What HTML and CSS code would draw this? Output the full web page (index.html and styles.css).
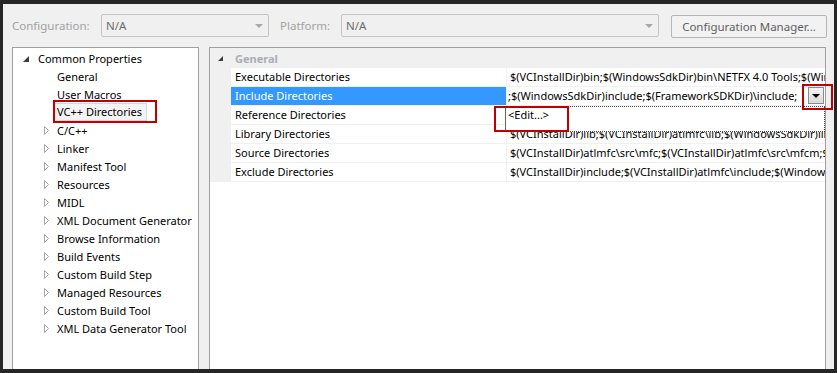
FILE: index.html
```html
<!DOCTYPE html>
<html lang="en">
<head>
    <meta charset="utf-8">
    <title>Property Pages</title>
    <link rel="stylesheet" href="styles.css">
</head>
<body>
    <div class="window">
        <div class="toolbar">
            <span class="label config-label">Configuration:</span>
            <div class="combo config-combo"><span>N/A</span><i class="combo-arrow"></i></div>
            <span class="label platform-label">Platform:</span>
            <div class="combo platform-combo"><span>N/A</span><i class="combo-arrow"></i></div>
            <button class="manager">Configuration Manager...</button>
        </div>

        <div class="panes">
            <div class="tree">
                <div class="node root">
                    <svg class="exp" width="6" height="6" viewBox="0 0 6 6"><polygon points="6,0 6,6 0,6" fill="#3c3c3c"/></svg>
                    Common Properties
                </div>
                <div class="node leaf">General</div>
                <div class="node leaf">User Macros</div>
                <div class="node leaf"><span class="selected">VC++ Directories</span></div>
                <div class="node"><svg class="exp" width="5" height="9" viewBox="0 0 5 9"><polygon points="0.5,0.5 4.5,4.5 0.5,8.5" fill="none" stroke="#a6a6a6"/></svg>C/C++</div>
                <div class="node"><svg class="exp" width="5" height="9" viewBox="0 0 5 9"><polygon points="0.5,0.5 4.5,4.5 0.5,8.5" fill="none" stroke="#a6a6a6"/></svg>Linker</div>
                <div class="node"><svg class="exp" width="5" height="9" viewBox="0 0 5 9"><polygon points="0.5,0.5 4.5,4.5 0.5,8.5" fill="none" stroke="#a6a6a6"/></svg>Manifest Tool</div>
                <div class="node"><svg class="exp" width="5" height="9" viewBox="0 0 5 9"><polygon points="0.5,0.5 4.5,4.5 0.5,8.5" fill="none" stroke="#a6a6a6"/></svg>Resources</div>
                <div class="node"><svg class="exp" width="5" height="9" viewBox="0 0 5 9"><polygon points="0.5,0.5 4.5,4.5 0.5,8.5" fill="none" stroke="#a6a6a6"/></svg>MIDL</div>
                <div class="node"><svg class="exp" width="5" height="9" viewBox="0 0 5 9"><polygon points="0.5,0.5 4.5,4.5 0.5,8.5" fill="none" stroke="#a6a6a6"/></svg>XML Document Generator</div>
                <div class="node"><svg class="exp" width="5" height="9" viewBox="0 0 5 9"><polygon points="0.5,0.5 4.5,4.5 0.5,8.5" fill="none" stroke="#a6a6a6"/></svg>Browse Information</div>
                <div class="node"><svg class="exp" width="5" height="9" viewBox="0 0 5 9"><polygon points="0.5,0.5 4.5,4.5 0.5,8.5" fill="none" stroke="#a6a6a6"/></svg>Build Events</div>
                <div class="node"><svg class="exp" width="5" height="9" viewBox="0 0 5 9"><polygon points="0.5,0.5 4.5,4.5 0.5,8.5" fill="none" stroke="#a6a6a6"/></svg>Custom Build Step</div>
                <div class="node"><svg class="exp" width="5" height="9" viewBox="0 0 5 9"><polygon points="0.5,0.5 4.5,4.5 0.5,8.5" fill="none" stroke="#a6a6a6"/></svg>Managed Resources</div>
                <div class="node"><svg class="exp" width="5" height="9" viewBox="0 0 5 9"><polygon points="0.5,0.5 4.5,4.5 0.5,8.5" fill="none" stroke="#a6a6a6"/></svg>Custom Build Tool</div>
                <div class="node"><svg class="exp" width="5" height="9" viewBox="0 0 5 9"><polygon points="0.5,0.5 4.5,4.5 0.5,8.5" fill="none" stroke="#a6a6a6"/></svg>XML Data Generator Tool</div>
            </div>

            <div class="grid">
                <div class="category">
                    <svg class="cat-exp" width="5" height="5" viewBox="0 0 5 5"><polygon points="5,0 5,5 0,5" fill="#3c3c3c"/></svg>
                    General
                </div>
                <div class="row">
                    <div class="margin"></div>
                    <div class="name">Executable Directories</div>
                    <div class="value">$(VCInstallDir)bin;$(WindowsSdkDir)bin\NETFX 4.0 Tools;$(WindowsSdkDir)bin;$(VSInstallDir)Common7\Tools\bin</div>
                </div>
                <div class="row active">
                    <div class="margin"></div>
                    <div class="name">Include Directories</div>
                    <div class="value editing">
                        <span class="edit-text">;$(WindowsSdkDir)include;$(FrameworkSDKDir)\include;</span>
                        <span class="drop-btn"><i></i></span>
                        <div class="drop-list">&lt;Edit...&gt;</div>
                    </div>
                </div>
                <div class="row">
                    <div class="margin"></div>
                    <div class="name">Reference Directories</div>
                    <div class="value">$(VCInstallDir)atlmfc\lib;$(VCInstallDir)lib</div>
                </div>
                <div class="row">
                    <div class="margin"></div>
                    <div class="name">Library Directories</div>
                    <div class="value">$(VCInstallDir)lib;$(VCInstallDir)atlmfc\lib;$(WindowsSdkDir)lib;$(FrameworkSDKDir)\lib</div>
                </div>
                <div class="row">
                    <div class="margin"></div>
                    <div class="name">Source Directories</div>
                    <div class="value">$(VCInstallDir)atlmfc\src\mfc;$(VCInstallDir)atlmfc\src\mfcm;$(VCInstallDir)atlmfc\src\atl</div>
                </div>
                <div class="row">
                    <div class="margin"></div>
                    <div class="name">Exclude Directories</div>
                    <div class="value">$(VCInstallDir)include;$(VCInstallDir)atlmfc\include;$(WindowsSdkDir)include;$(FrameworkSDKDir)\include</div>
                </div>
            </div>
        </div>

        <!-- red callouts drawn over the screenshot -->
        <div class="callout callout-tree"></div>
        <div class="callout callout-edit"></div>
        <div class="callout callout-btn"></div>
    </div>
</body>
</html>
```

FILE: styles.css
```css
html, body {
    margin: 0;
    padding: 0;
}

body {
    background-color: #262626;
    font-family: "Noto Sans", "Open Sans", sans-serif;
    font-size: 11px;
    color: #000;
    padding: 4px 3px 4px 3px;
}

.window {
    position: relative;
    width: 831px;
    height: 365px;
    background-color: #f0f0f0;
    display: flex;
    flex-direction: column;
}

/* top bar */
.toolbar {
    display: flex;
    align-items: center;
    height: 23px;
    padding: 10px 0 10px 9px;
    font-size: 11.5px;
}

.label {
    color: #a2a2a2;
}

.config-label {
    width: 89px;
}

.platform-label {
    width: 61px;
    margin-left: 11px;
}

.combo {
    box-sizing: border-box;
    height: 23px;
    border: 1px solid #c4c4c4;
    border-radius: 2px;
    background-color: #f0f0f0;
    color: #6d6d6d;
    display: flex;
    align-items: center;
    justify-content: space-between;
    padding: 0 3px 0 4px;
}

.config-combo {
    width: 168px;
}

.platform-combo {
    width: 318px;
}

.combo-arrow {
    width: 0;
    height: 0;
    border-left: 4px solid transparent;
    border-right: 4px solid transparent;
    border-top: 4px solid #a8a8a8;
    margin-right: 2px;
}

.manager {
    box-sizing: border-box;
    width: 156px;
    height: 23px;
    margin-left: 12px;
    margin-top: 2px;
    border: 1px solid #b5b5b5;
    border-radius: 2px;
    background-color: #f2f2f2;
    color: #5f5f5f;
    font-family: inherit;
    font-size: 11.5px;
    padding: 0;
}

/* lower part */
.panes {
    flex: 1;
    display: flex;
    padding-left: 9px;
    min-height: 0;
}

.tree {
    box-sizing: border-box;
    width: 187px;
    background-color: #fff;
    border: 1px solid #a0a0a0;
    border-bottom: none;
    padding-top: 1px;
    overflow: hidden;
}

.node {
    display: flex;
    align-items: center;
    height: 18px;
    padding-left: 31px;
    white-space: nowrap;
}

.node .exp {
    margin-right: 8px;
    flex: none;
}

.node.root {
    padding-left: 10px;
}

.node.root .exp {
    margin-right: 9px;
    margin-top: 2px;
}

.node.leaf {
    padding-left: 44px;
}

.selected {
    border: 1px solid #d6d6d6;
    background-color: #f3f3f3;
    padding: 0 4px 0 2px;
    margin-left: -3px;
    line-height: 16px;
}

.grid {
    box-sizing: border-box;
    width: 617px;
    margin-left: 10px;
    background-color: #fff;
    border: 1px solid #a0a0a0;
    border-bottom: none;
}

.category {
    display: flex;
    align-items: center;
    height: 20px;
    background-color: #f0f0f0;
    color: #a9aeb4;
    font-weight: bold;
}

.cat-exp {
    margin-left: 8px;
    margin-right: 12px;
    margin-top: 1px;
}

.row {
    display: flex;
    height: 18px;
    border-bottom: 1px solid #f0f0f0;
    line-height: 17px;
}

.margin {
    width: 21px;
    flex: none;
    background-color: #f0f0f0;
}

.name {
    width: 271px;
    flex: none;
    padding-left: 4px;
    border-right: 1px solid #f0f0f0;
    white-space: nowrap;
}

.value {
    flex: 1;
    min-width: 0;
    padding-left: 3px;
    white-space: nowrap;
    overflow: hidden;
}

.row.active .name {
    background-color: #3399ff;
    color: #fff;
}

.value.editing {
    position: relative;
    overflow: visible;
    display: flex;
    padding-left: 1px;
}

.edit-text {
    flex: 1;
    min-width: 0;
    overflow: hidden;
}

.drop-btn {
    box-sizing: border-box;
    flex: none;
    width: 16px;
    height: 17px;
    margin: 0 1px 0 2px;
    border: 1px solid #8c8c8c;
    background: linear-gradient(#f4f4f4, #d9d9d9);
    display: flex;
    align-items: center;
    justify-content: center;
}

.drop-btn i {
    width: 0;
    height: 0;
    border-left: 4px solid transparent;
    border-right: 4px solid transparent;
    border-top: 4px solid #000;
}

.drop-list {
    position: absolute;
    left: -2px;
    top: 19px;
    box-sizing: border-box;
    width: 320px;
    height: 26px;
    background-color: #fff;
    border: 1px dotted #444;
    border-left: 1px solid #646464;
    padding-left: 2px;
    line-height: 16px;
}

/* red annotation boxes */
.callout {
    position: absolute;
    box-sizing: border-box;
    border: 2px solid #c00000;
}

.callout-tree {
    left: 50px;
    top: 96px;
    width: 104px;
    height: 23px;
}

.callout-edit {
    left: 491px;
    top: 102px;
    width: 75px;
    height: 26px;
}

.callout-btn {
    left: 799px;
    top: 80px;
    width: 31px;
    height: 26px;
}
```
